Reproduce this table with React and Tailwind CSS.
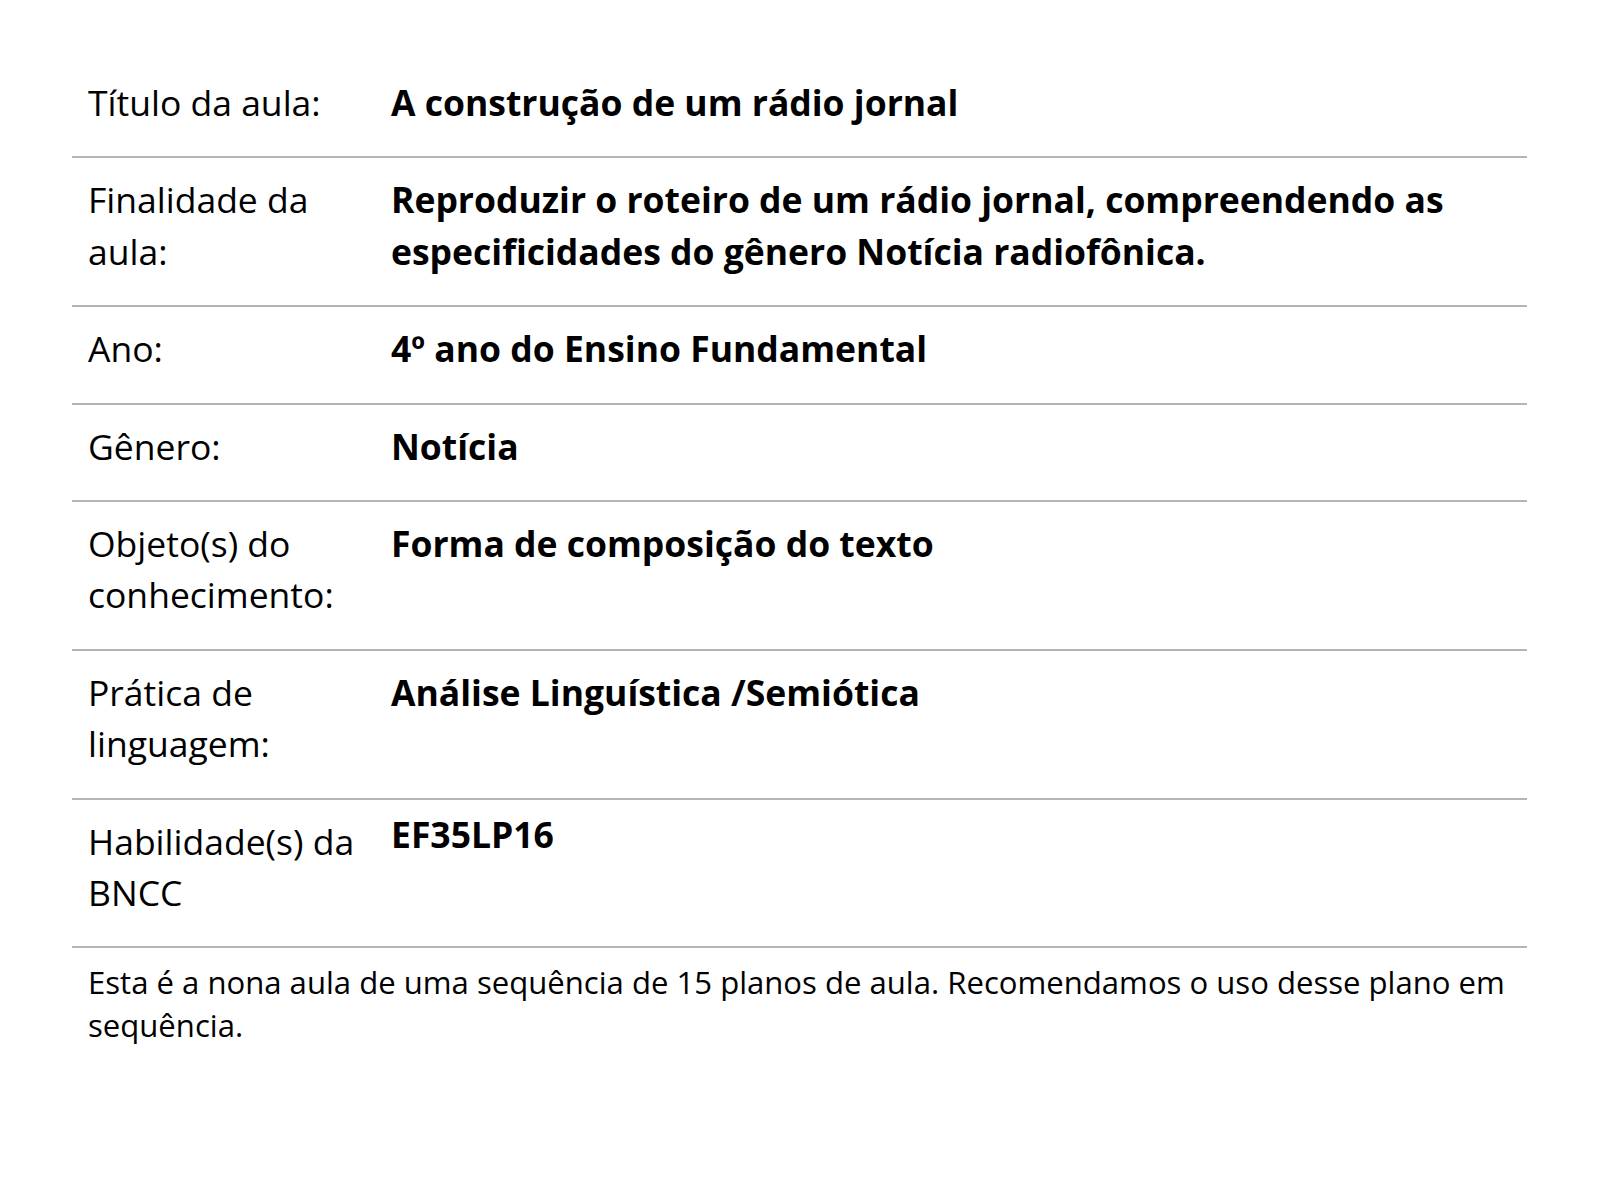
import React from 'react';

const rows = [
    { label: 'Título da aula:', value: 'A construção de um rádio jornal' },
    { label: 'Finalidade da aula:', value: 'Reproduzir o roteiro de um rádio jornal, compreendendo as especificidades do gênero Notícia radiofônica.' },
    { label: 'Ano:', value: '4º ano do Ensino Fundamental' },
    { label: 'Gênero:', value: 'Notícia' },
    { label: 'Objeto(s) do conhecimento:', value: 'Forma de composição do texto' },
    { label: 'Prática de linguagem:', value: 'Análise Linguística /Semiótica' },
    { label: 'Habilidade(s) da BNCC', value: 'EF35LP16', code: true },
];

export default function App() {
    return (
        <div className="min-h-screen bg-white text-black font-['Open_Sans',sans-serif]">
            <div className="ml-[72px] w-[1455px] pt-[61px]">
                {rows.map(row => (
                    <div key={row.label} className="flex border-b-2 border-[#b4b4b4]">
                        <div className="w-[303px] shrink-0 pl-4 pr-2 pt-4 pb-[28px] text-[35.5px] leading-[51.4px] font-normal">
                            {row.label}
                        </div>
                        <div className={`flex-1 pl-4 pr-4 pt-4 pb-[28px] text-[35.5px] leading-[51.4px] font-bold ${row.code ? '-mt-[7px]' : ''}`}>
                            {row.value}
                        </div>
                    </div>
                ))}
                <p className="px-4 pt-[13px] text-[31.1px] leading-[43px]">
                    Esta é a nona aula de uma sequência de 15 planos de aula. Recomendamos o uso desse plano em sequência.
                </p>
            </div>
        </div>
    );
}
